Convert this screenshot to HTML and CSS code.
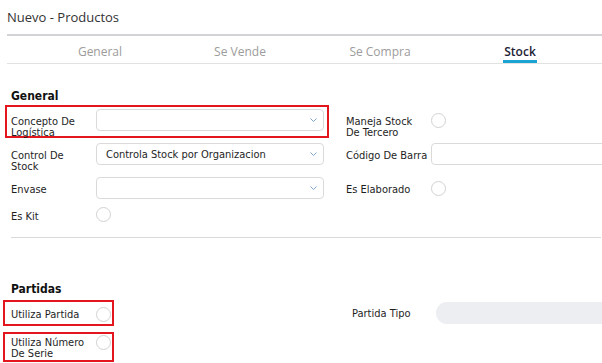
FILE: index.html
```html
<!DOCTYPE html>
<html>
<head>
  <meta charset="utf-8">
  <link rel="stylesheet" href="styles.css">
</head>

<body>
  <div class="header">
    <div class="title">Nuevo - Productos</div>
    <div class="tabs">
      <div class="tab">General</div>
      <div class="tab">Se Vende</div>
      <div class="tab">Se Compra</div>
      <div class="tab active"><span>Stock</span></div>
    </div>
  </div>

  <div class="section">
    <h4>General</h4>
    <div class="fields">
      <!-- row 1 -->
      <div class="field marked">
        <label>Concepto De Logística</label>
        <div class="select"><span></span><svg width="7" height="4" viewBox="0 0 7 4"><polyline points="0.5,0.5 3.5,3.5 6.5,0.5" fill="none" stroke="#7fa3cf" stroke-width="1"/></svg></div>
      </div>
      <div class="field">
        <label>Maneja Stock De Tercero</label>
        <span class="radio"></span>
      </div>

      <!-- row 2 -->
      <div class="field">
        <label>Control De Stock</label>
        <div class="select"><span>Controla Stock por Organizacion</span><svg width="7" height="4" viewBox="0 0 7 4"><polyline points="0.5,0.5 3.5,3.5 6.5,0.5" fill="none" stroke="#7fa3cf" stroke-width="1"/></svg></div>
      </div>
      <div class="field">
        <label>Código De Barra</label>
        <div class="input"></div>
      </div>

      <!-- row 3 -->
      <div class="field">
        <label>Envase</label>
        <div class="select"><span></span><svg width="7" height="4" viewBox="0 0 7 4"><polyline points="0.5,0.5 3.5,3.5 6.5,0.5" fill="none" stroke="#7fa3cf" stroke-width="1"/></svg></div>
      </div>
      <div class="field">
        <label>Es Elaborado</label>
        <span class="radio"></span>
      </div>

      <!-- row 4 -->
      <div class="field kit">
        <label>Es Kit</label>
        <span class="radio"></span>
      </div>
    </div>

    <hr class="divider">

    <h4 class="sub">Partidas</h4>
    <div class="prow">
      <div class="check">
        <label>Utiliza Partida</label>
        <span class="radio"></span>
      </div>
      <div class="tipo">
        <label>Partida Tipo</label>
        <div class="pill"></div>
      </div>
    </div>
    <div class="check serie">
      <label>Utiliza Número De Serie</label>
      <span class="radio"></span>
    </div>
  </div>
</body>
</html>
```

FILE: styles.css
```css
html, body {
  margin: 0;
  overflow: hidden;
}

body {
  font-family: "DejaVu Sans Condensed", "DejaVu Sans", sans-serif;
  font-stretch: condensed;
  font-size: 11px;
  color: #1e1e1e;
  background: #fff;
}

/* Header + tabs */
.header {
  margin-left: 7px;
  font-family: "Open Sans", sans-serif;
  font-stretch: normal;
}

.title {
  font-size: 13px;
  line-height: 20px;
  padding: 7px 0;
  color: #333;
  border-bottom: 2px solid #d3d3d7;
}

.tabs {
  display: flex;
  height: 27px;
  padding-left: 23px;
  border-bottom: 1px solid #e2e2e2;
  font-size: 12px;
  color: #9c9c9c;
}

.tab {
  width: 140px;
  text-align: center;
  padding-top: 8px;
  line-height: 16px;
}

.tab.active span {
  display: inline-block;
  color: #1c1c35;
  font-weight: 600;
  padding: 0 1px 0;
  border-bottom: 3px solid #1ba4d3;
}

/* Form */
.section {
  padding: 25px 1px 0 11px;
}

h4 {
  margin: 0;
  font-size: 12px;
  line-height: 14px;
  font-weight: bold;
  color: #111;
}

.fields {
  display: grid;
  grid-template-columns: 313px 313px;
  grid-template-rows: 22px 22px 22px 16px;
  column-gap: 22px;
  row-gap: 12px;
  margin-top: 6px;
}

.field {
  display: flex;
  align-items: flex-start;
}

label {
  flex: none;
  box-sizing: border-box;
  width: 85px;
  padding: 7px 2px 0 0;
  line-height: 11px;
}

.select, .input {
  flex: none;
  box-sizing: border-box;
  width: 228px;
  height: 22px;
  border: 1px solid #dadada;
  border-radius: 4px;
  background: #fff;
}

.select {
  display: flex;
  align-items: center;
  justify-content: space-between;
  padding: 0 6px 0 9px;
}

.radio {
  flex: none;
  box-sizing: border-box;
  width: 15px;
  height: 15px;
  margin-top: 3.5px;
  border: 1px solid #d2d2d2;
  border-radius: 50%;
}

.field.kit {
  margin-top: -4px;
}

.field.kit label {
  padding-top: 4px;
}

.field.kit .radio {
  margin-top: 0;
}

/* red highlight around a field */
.marked {
  border: 2px solid #e3161d;
  margin: -4px -5px -7px -6px;
  padding: 2px 3px 5px 4px;
}

.divider {
  margin: 10px 0 0;
  border: 0;
  border-top: 1px solid #dadada;
}

h4.sub {
  margin-top: 44px;
}

.prow {
  display: flex;
  align-items: center;
  margin-top: 4px;
}

.check {
  display: flex;
  align-items: flex-start;
  width: 100px;
  height: 22px;
  margin-left: -8px;
  padding: 0 1px 0 6px;
  border: 2px solid #e3161d;
}

.check label {
  padding-top: 7px;
}

.check .radio {
  margin-top: 5px;
}

.check.serie {
  height: 26px;
  margin-top: 6px;
}

.check.serie label {
  padding-top: 3px;
}

.check.serie .radio {
  margin-top: 1px;
}

.tipo {
  display: flex;
  align-items: center;
  margin-left: 238px;
}

.tipo label {
  width: 84px;
  padding-top: 0;
}

.pill {
  flex: none;
  width: 228px;
  height: 22px;
  border-radius: 11px;
  background: #edeef1;
}
```
